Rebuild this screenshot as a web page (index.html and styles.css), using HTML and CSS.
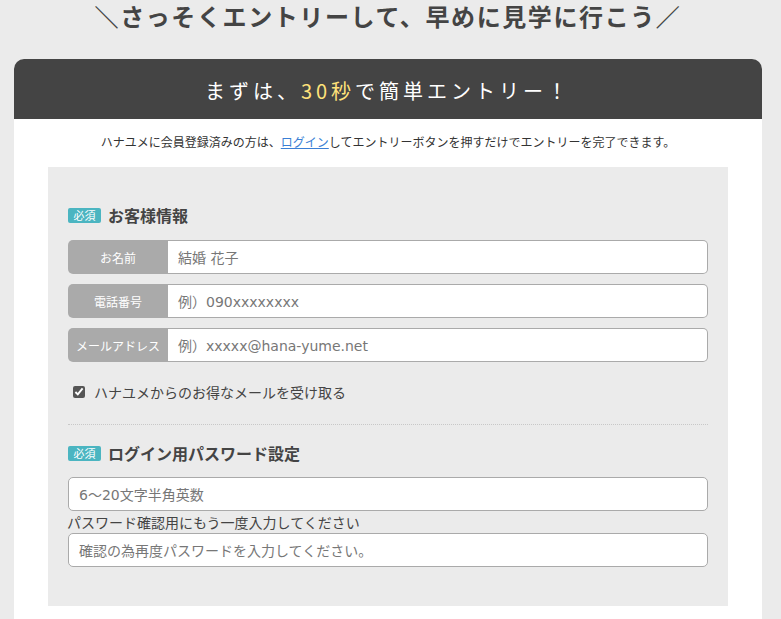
FILE: index.html
```html
<!DOCTYPE html>
<html lang="ja">
<head>
<meta charset="utf-8">
<title>エントリー</title>
<link rel="stylesheet" href="styles.css">
</head>
<body>
<h1 class="lead">＼さっそくエントリーして、早めに見学に行こう／</h1>
<div class="card">
  <div class="card-head">まずは、<span class="hl">30秒</span>で簡単エントリー！</div>
  <div class="card-body">
    <p class="note">ハナユメに会員登録済みの方は、<a href="#" class="link">ログイン</a>してエントリーボタンを押すだけでエントリーを完了できます。</p>
    <div class="form-box">
      <h2 class="sec-title"><span class="badge">必須</span>お客様情報</h2>
      <div class="rows">
        <div class="row"><span class="row-label">お名前</span><span class="row-input">結婚 花子</span></div>
        <div class="row"><span class="row-label">電話番号</span><span class="row-input">例）090xxxxxxxx</span></div>
        <div class="row"><span class="row-label">メールアドレス</span><span class="row-input">例）xxxxx@hana-yume.net</span></div>
      </div>
      <label class="check"><input type="checkbox" checked class="cb"><span>ハナユメからのお得なメールを受け取る</span></label>
      <hr class="divider">
      <h2 class="sec-title"><span class="badge">必須</span>ログイン用パスワード設定</h2>
      <div class="field">6〜20文字半角英数</div>
      <div class="field-label">パスワード確認用にもう一度入力してください</div>
      <div class="field">確認の為再度パスワードを入力してください。</div>
    </div>
  </div>
</div>
</body>
</html>
```

FILE: styles.css
```css
* { box-sizing: border-box; }
html, body { margin: 0; padding: 0; }
body {
  background: #ebebeb;
  font-family: "Noto Sans CJK JP", sans-serif;
  color: #444;
  padding: 0 19px 0 14px;
  height: 619px;
  overflow: hidden;
}
.lead {
  margin: 0;
  height: 59px;
  padding-top: 2px;
  text-align: center;
  font-size: 24px;
  font-weight: bold;
  line-height: 28px;
  color: #444;
  letter-spacing: 1.6px;
}
.card {
  background: #fff;
  border-radius: 10px 10px 0 0;
  overflow: hidden;
}
.card-head {
  background: #444;
  height: 60px;
  display: flex;
  align-items: center;
  justify-content: center;
  color: #fff;
  font-size: 20px;
  letter-spacing: 4px;
  padding-top: 2px;
}
.hl { color: #ffe27a; }
.card-body {
  padding: 10px 34px 14px 34px;
}
.note {
  margin: 0 0 12px;
  text-align: center;
  font-size: 12px;
  line-height: 26px;
  color: #333;
}
.link { color: #3a7fd5; text-decoration: underline; }
.form-box {
  background: #ebebeb;
  padding: 38px 20px 39px 20px;
}
.sec-title {
  margin: 0;
  display: flex;
  align-items: center;
  font-size: 16px;
  font-weight: bold;
  color: #444;
  line-height: 20px;
}
.badge {
  display: inline-block;
  background: #4bb5c1;
  color: #fff;
  font-size: 11px;
  font-weight: normal;
  line-height: 15px;
  width: 33px;
  text-align: center;
  border-radius: 2px;
  margin-right: 7px;
}
.rows {
  margin-top: 15px;
  display: flex;
  flex-direction: column;
  gap: 10px;
}
.row {
  display: flex;
  height: 34px;
}
.row-label {
  width: 100px;
  background: #aaa;
  color: #fff;
  font-size: 12px;
  border-radius: 5px 0 0 5px;
  display: flex;
  align-items: center;
  justify-content: center;
}
.row-input {
  flex: 1;
  background: #fff;
  border: 1px solid #aaa;
  border-left: none;
  border-radius: 0 5px 5px 0;
  font-family: "DejaVu Sans", "Noto Sans CJK JP", sans-serif;
  font-size: 14px;
  color: #777;
  display: flex;
  align-items: center;
  padding-left: 10px;
}
.check {
  display: flex;
  align-items: center;
  margin: 20px 0 0 4px;
  font-size: 14px;
  color: #444;
  line-height: 20px;
}
.cb {
  margin: 0 9px 0 1px;
  width: 12px;
  height: 12px;
  accent-color: #555;
}
.divider {
  border: none;
  border-top: 1px dotted #c8c8c8;
  margin: 22px 0 18px;
}
.field {
  margin-top: 14px;
  height: 34px;
  background: #fff;
  border: 1px solid #aaa;
  border-radius: 5px;
  font-family: "DejaVu Sans", "Noto Sans CJK JP", sans-serif;
  font-size: 14px;
  color: #777;
  display: flex;
  align-items: center;
  padding-left: 10px;
}
.field-label {
  font-size: 14px;
  color: #444;
  line-height: 20px;
  margin-left: -1px;
  margin-top: 1px;
}
.field-label + .field { margin-top: 1px; }
```
